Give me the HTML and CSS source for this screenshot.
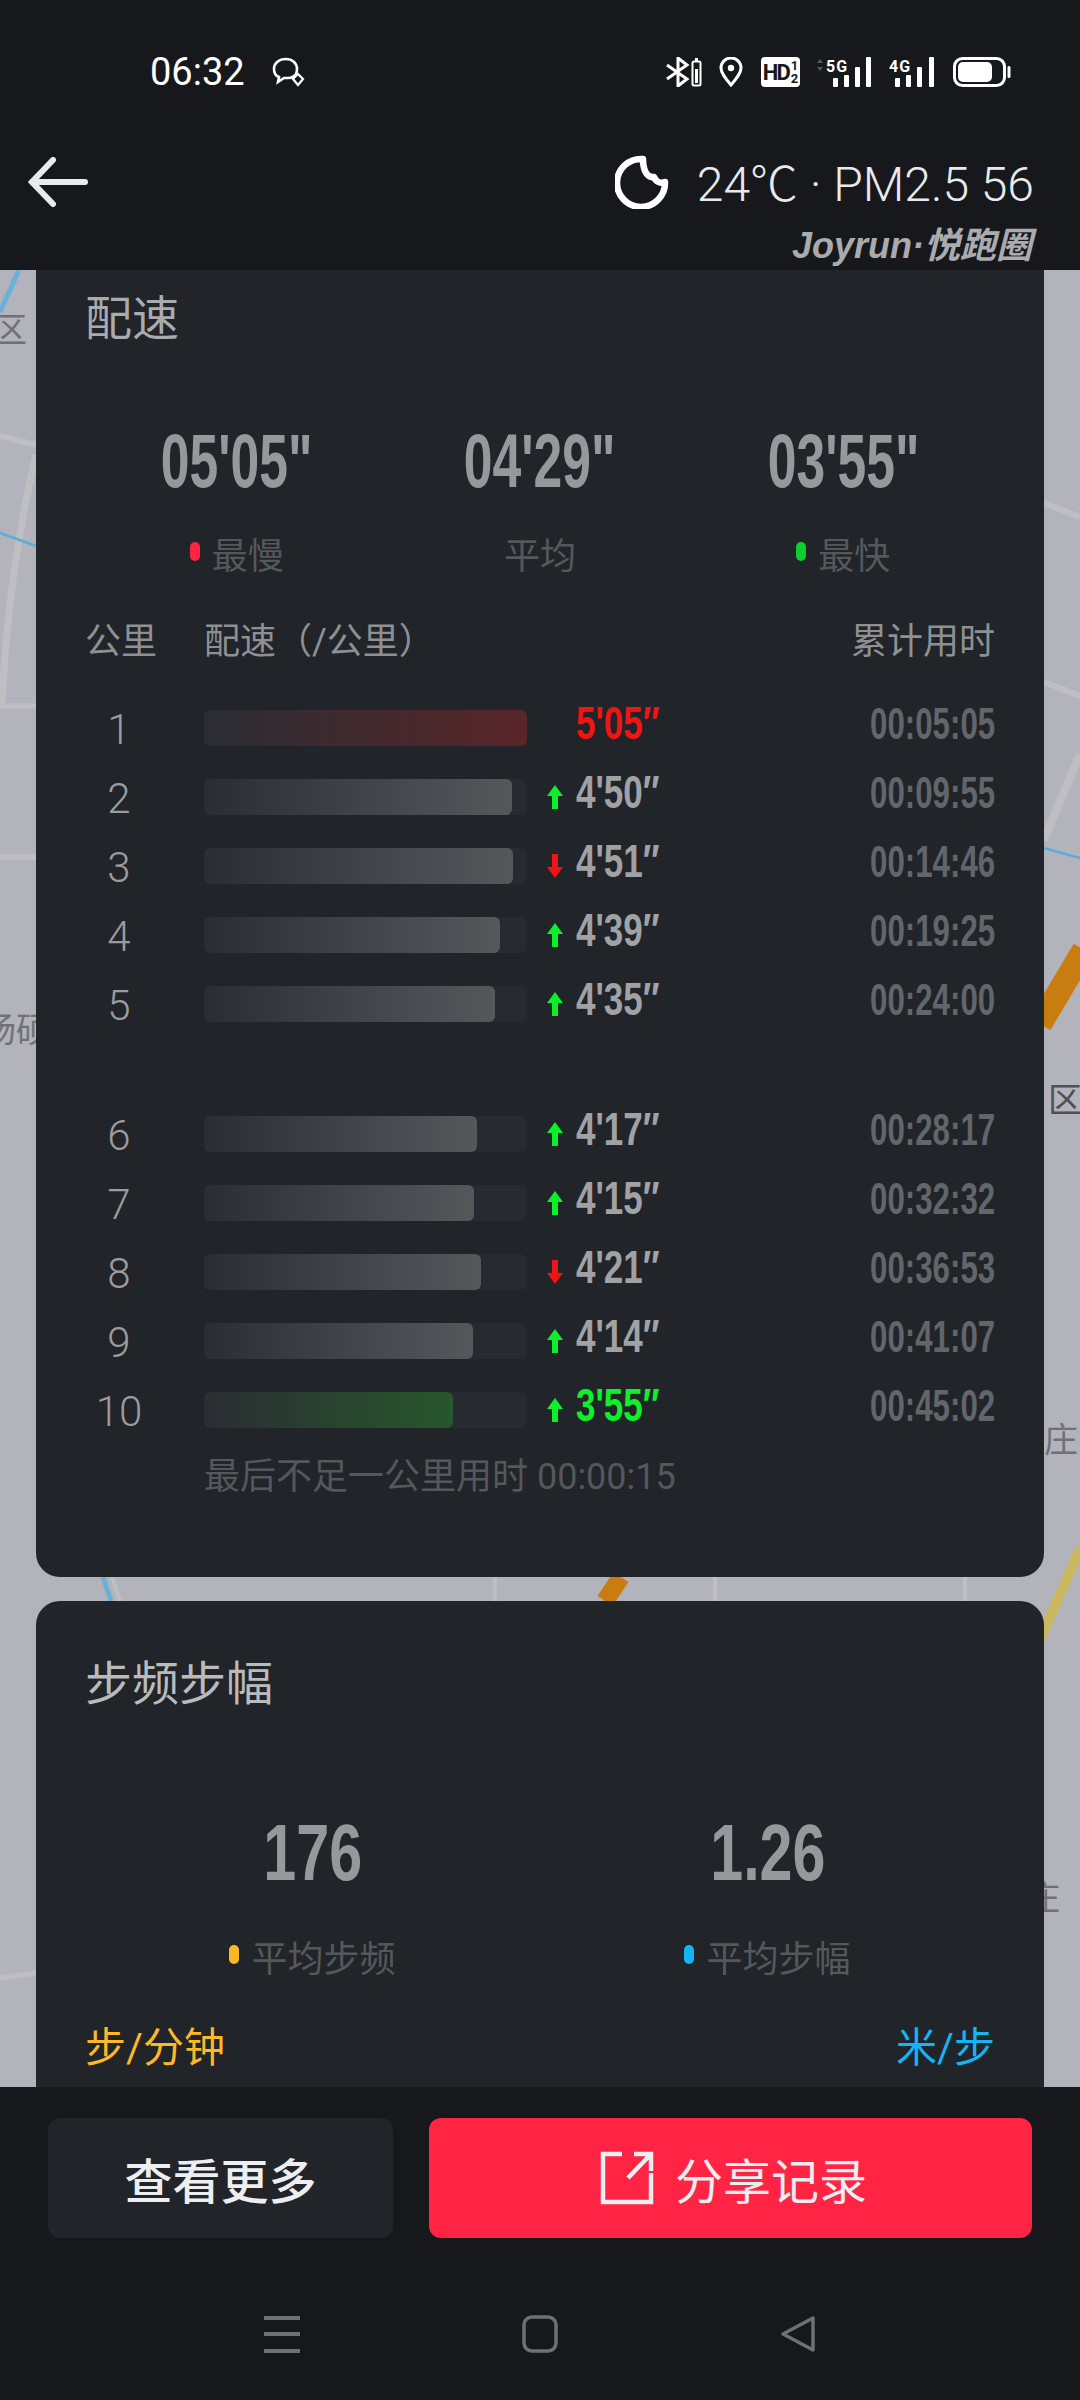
FILE: index.html
```html
<!DOCTYPE html>
<html lang="zh-CN">

<head>
    <meta charset="UTF-8">
    <meta name="viewport" content="width=device-width, initial-scale=1.0">
    <title>Joyrun</title>
    <link rel="stylesheet" href="styles.css">
</head>

<body>
    <div class="page">
        <header class="topBar">
            <div class="statusBar">
                <div class="statusLeft">
                    <span class="clock">06:32</span>
                    <svg class="msgIcon" viewBox="0 0 34 30" fill="none" stroke="#fff" stroke-width="2.6">
                        <path d="M14 2C7 2 2 6 2 12c0 4 2 7 5 8l-1 5 6-4h4c3 0 6-1 8-4 1-2 1-3 1-5 0-6-5-10-11-10z" />
                        <path d="M26 17l5 5-5 6-5-6z" stroke-width="2.2" fill="#17181c" />
                    </svg>
                </div>
                <div class="statusRight">
                    <svg class="iconBt" viewBox="0 0 36 30" fill="none" stroke="#fff">
                        <path d="M1 8l20 14-9 7V1l9 7L1 22" stroke-width="3" />
                        <rect x="26.5" y="4.5" width="8" height="24" rx="1.5" stroke-width="2" />
                        <rect x="29" y="1" width="3" height="3" fill="#fff" stroke="none" />
                        <rect x="29" y="12" width="3" height="14" fill="#fff" stroke="none" />
                    </svg>
                    <svg class="iconPin" viewBox="0 0 24 30" fill="none" stroke="#fff" stroke-width="3">
                        <path d="M12 28C6 21 2 16 2 11a10 10 0 0 1 20 0c0 5-4 10-10 17z" />
                        <circle cx="12" cy="11" r="3.2" fill="#fff" stroke="none" />
                    </svg>
                    <div class="hdBadge"><span class="hdText">HD</span><span class="hdFrac"><i>1</i><i>2</i></span></div>
                    <svg class="iconNet" viewBox="0 0 58 30">
                        <path d="M5 2l3 4H2zM5 14l3-4H2z" fill="#55565a" />
                        <text x="11" y="15" class="netText">5G</text>
                        <rect x="18" y="21" width="5" height="9" rx="1" fill="#fff" />
                        <rect x="29" y="18" width="5" height="12" rx="1" fill="#fff" />
                        <rect x="40" y="10" width="5" height="20" rx="1" fill="#fff" />
                        <rect x="51" y="0" width="5" height="30" rx="1" fill="#fff" />
                    </svg>
                    <svg class="iconNet4" viewBox="0 0 46 30">
                        <text x="0" y="15" class="netText">4G</text>
                        <rect x="6" y="21" width="5" height="9" rx="1" fill="#fff" />
                        <rect x="17" y="18" width="5" height="12" rx="1" fill="#fff" />
                        <rect x="28" y="10" width="5" height="20" rx="1" fill="#fff" />
                        <rect x="40" y="0" width="5" height="30" rx="1" fill="#fff" />
                    </svg>
                    <svg class="iconBattery" viewBox="0 0 58 30" fill="none">
                        <rect x="1.5" y="1.5" width="50" height="27" rx="8" stroke="#fff" stroke-width="3" />
                        <rect x="5" y="5" width="34" height="20" rx="5" fill="#fff" />
                        <rect x="54.5" y="9" width="3" height="12" rx="1.5" fill="#fff" />
                    </svg>
                </div>
            </div>
            <div class="navRow">
                <svg class="backIcon" viewBox="0 0 60 50" fill="none" stroke="#e8eaed" stroke-width="6" stroke-linecap="round">
                    <path d="M25 3L4 25l21 22M4 25h53" />
                </svg>
                <div class="weather">
                    <svg class="moonIcon" viewBox="0 0 54 54" fill="none" stroke="#fff" stroke-width="6.5" stroke-linejoin="round">
                        <path d="M28 4A24 24 0 1 0 50 27C46 29 41 27 39 22C33 23 28 17 28 4Z" />
                    </svg>
                    <span class="weatherText">24℃ · PM2.5 56</span>
                </div>
            </div>
            <div class="brand">Joyrun·悦跑圈</div>
        </header>

        <main class="scrollArea">
            <svg class="mapBg" viewBox="0 270 1080 1817" fill="none">
                <path d="M0 436L36 445M1044 503L1080 517M1044 682L1080 696" stroke="#bfbfc3" stroke-width="6" />
                <path d="M36 455C18 530 6 620 2 704" stroke="#bfbfc3" stroke-width="7" />
                <path d="M0 706H36M0 857H36M0 1978L36 1973" stroke="#bfbfc3" stroke-width="5" />
                <path d="M1044 840L1080 754" stroke="#bfbfc3" stroke-width="8" />
                <path d="M495 1577V1601M715 1577V1601M965 1577V1601M112 1577L120 1601" stroke="#bfbfc3" stroke-width="4" />
                <path d="M19 270L0 312M103 1577L111 1601" stroke="#6bb0d8" stroke-width="5" />
                <path d="M0 533L36 546M1044 848L1080 858" stroke="#5aaed6" stroke-width="2.5" />
                <path d="M1040 1024L1084 950" stroke="#c97d10" stroke-width="24" />
                <path d="M621 1577L605 1601" stroke="#c97d10" stroke-width="18" />
                <path d="M1040 1640L1080 1548" stroke="#c9b860" stroke-width="10" />
                <text x="-7" y="342" class="mapText">区</text>
                <text x="-18" y="1042" class="mapText">扬硕</text>
                <text x="1048" y="1112" class="mapText dark">区</text>
                <text x="1044" y="1452" class="mapText">庄</text>
                <text x="1026" y="1910" class="mapText">庄</text>
            </svg>

            <section class="card paceCard">
                <h2 class="cardTitle">配速</h2>
                <div class="stats three">
                    <div class="stat">
                        <div class="statValue"><span class="cond big">05'05"</span></div>
                        <div class="statLabel"><i class="dot red"></i>最慢</div>
                    </div>
                    <div class="stat">
                        <div class="statValue"><span class="cond big">04'29"</span></div>
                        <div class="statLabel">平均</div>
                    </div>
                    <div class="stat">
                        <div class="statValue"><span class="cond big">03'55"</span></div>
                        <div class="statLabel"><i class="dot green"></i>最快</div>
                    </div>
                </div>
                <div class="tableHead">
                    <span class="headKm">公里</span>
                    <span class="headPace">配速（/公里）</span>
                    <span class="headTotal">累计用时</span>
                </div>
                <div class="rows">
                    <div class="row">
                        <span class="km">1</span>
                        <div class="track"><div class="fill slow" style="width: 323px"></div></div>
                        <span class="arrow"></span>
                        <span class="pace redText"><span class="cond mid">5'05″</span></span>
                        <span class="total"><span class="cond end">00:05:05</span></span>
                    </div>
                    <div class="row">
                        <span class="km">2</span>
                        <div class="track"><div class="fill" style="width: 308px"></div></div>
                        <span class="arrow"><svg viewBox="0 0 16 24"><path d="M8 0l8 11h-5v13H5V11H0z" fill="#0bf02a" /></svg></span>
                        <span class="pace"><span class="cond mid">4'50″</span></span>
                        <span class="total"><span class="cond end">00:09:55</span></span>
                    </div>
                    <div class="row">
                        <span class="km">3</span>
                        <div class="track"><div class="fill" style="width: 309px"></div></div>
                        <span class="arrow"><svg viewBox="0 0 16 24"><path d="M8 24L0 13h5V0h6v13h5z" fill="#f01414" /></svg></span>
                        <span class="pace"><span class="cond mid">4'51″</span></span>
                        <span class="total"><span class="cond end">00:14:46</span></span>
                    </div>
                    <div class="row">
                        <span class="km">4</span>
                        <div class="track"><div class="fill" style="width: 296px"></div></div>
                        <span class="arrow"><svg viewBox="0 0 16 24"><path d="M8 0l8 11h-5v13H5V11H0z" fill="#0bf02a" /></svg></span>
                        <span class="pace"><span class="cond mid">4'39″</span></span>
                        <span class="total"><span class="cond end">00:19:25</span></span>
                    </div>
                    <div class="row rowBreak">
                        <span class="km">5</span>
                        <div class="track"><div class="fill" style="width: 291px"></div></div>
                        <span class="arrow"><svg viewBox="0 0 16 24"><path d="M8 0l8 11h-5v13H5V11H0z" fill="#0bf02a" /></svg></span>
                        <span class="pace"><span class="cond mid">4'35″</span></span>
                        <span class="total"><span class="cond end">00:24:00</span></span>
                    </div>
                    <div class="row">
                        <span class="km">6</span>
                        <div class="track"><div class="fill" style="width: 273px"></div></div>
                        <span class="arrow"><svg viewBox="0 0 16 24"><path d="M8 0l8 11h-5v13H5V11H0z" fill="#0bf02a" /></svg></span>
                        <span class="pace"><span class="cond mid">4'17″</span></span>
                        <span class="total"><span class="cond end">00:28:17</span></span>
                    </div>
                    <div class="row">
                        <span class="km">7</span>
                        <div class="track"><div class="fill" style="width: 270px"></div></div>
                        <span class="arrow"><svg viewBox="0 0 16 24"><path d="M8 0l8 11h-5v13H5V11H0z" fill="#0bf02a" /></svg></span>
                        <span class="pace"><span class="cond mid">4'15″</span></span>
                        <span class="total"><span class="cond end">00:32:32</span></span>
                    </div>
                    <div class="row">
                        <span class="km">8</span>
                        <div class="track"><div class="fill" style="width: 277px"></div></div>
                        <span class="arrow"><svg viewBox="0 0 16 24"><path d="M8 24L0 13h5V0h6v13h5z" fill="#f01414" /></svg></span>
                        <span class="pace"><span class="cond mid">4'21″</span></span>
                        <span class="total"><span class="cond end">00:36:53</span></span>
                    </div>
                    <div class="row">
                        <span class="km">9</span>
                        <div class="track"><div class="fill" style="width: 269px"></div></div>
                        <span class="arrow"><svg viewBox="0 0 16 24"><path d="M8 0l8 11h-5v13H5V11H0z" fill="#0bf02a" /></svg></span>
                        <span class="pace"><span class="cond mid">4'14″</span></span>
                        <span class="total"><span class="cond end">00:41:07</span></span>
                    </div>
                    <div class="row">
                        <span class="km">10</span>
                        <div class="track"><div class="fill fast" style="width: 249px"></div></div>
                        <span class="arrow"><svg viewBox="0 0 16 24"><path d="M8 0l8 11h-5v13H5V11H0z" fill="#0bf02a" /></svg></span>
                        <span class="pace greenText"><span class="cond mid">3'55″</span></span>
                        <span class="total"><span class="cond end">00:45:02</span></span>
                    </div>
                </div>
                <div class="lastNote">最后不足一公里用时 00:00:15</div>
            </section>

            <section class="card cadenceCard">
                <h2 class="cardTitle light">步频步幅</h2>
                <div class="stats two">
                    <div class="stat">
                        <div class="statValue"><span class="cond big wide">176</span></div>
                        <div class="statLabel"><i class="dot orange"></i>平均步频</div>
                    </div>
                    <div class="stat">
                        <div class="statValue"><span class="cond big wide">1.26</span></div>
                        <div class="statLabel"><i class="dot blue"></i>平均步幅</div>
                    </div>
                </div>
                <div class="units">
                    <span class="unitOrange">步/分钟</span>
                    <span class="unitBlue">米/步</span>
                </div>
            </section>
        </main>

        <footer class="bottomBar">
            <div class="actions">
                <button class="btn btnMore">查看更多</button>
                <button class="btn btnShare">
                    <svg class="shareIcon" viewBox="0 0 54 54" fill="none" stroke="#eceef0" stroke-width="4.5">
                        <path d="M22 3H3v48h48V22M28 27L50 4M34 3h17v17" />
                    </svg>
                    分享记录
                </button>
            </div>
            <div class="navBar">
                <svg class="navMenu" viewBox="0 0 36 37" fill="#6f7074">
                    <rect y="0" width="36" height="4" />
                    <rect y="16" width="36" height="4" />
                    <rect y="33" width="36" height="4" />
                </svg>
                <svg class="navHome" viewBox="0 0 36 38" fill="none" stroke="#6f7074" stroke-width="3.5">
                    <rect x="2" y="2" width="32" height="34" rx="8" />
                </svg>
                <svg class="navBack" viewBox="0 0 36 36" fill="none" stroke="#6f7074" stroke-width="3.5" stroke-linejoin="round">
                    <path d="M33 2L3 18l30 16z" />
                </svg>
            </div>
        </footer>
    </div>
</body>

</html>
```

FILE: styles.css
```css
* {
    box-sizing: border-box;
}

body {
    margin: 0;
    background: #17181c;
    font-family: Roboto, "Noto Sans CJK SC", sans-serif;
}

.page {
    display: flex;
    flex-direction: column;
    width: 1080px;
    height: 2400px;
    overflow: hidden;
}

/* top bar */
.topBar {
    height: 270px;
    flex: none;
    background: #17181c;
}

.statusBar {
    display: flex;
    justify-content: space-between;
    align-items: center;
    height: 144px;
    padding: 0 69px 0 150px;
}

.statusLeft {
    display: flex;
    align-items: center;
    gap: 27px;
}

.clock {
    font-size: 38px;
    color: #fff;
}

.msgIcon {
    width: 34px;
    height: 30px;
}

.statusRight {
    display: flex;
    align-items: center;
}

.statusRight svg {
    height: 30px;
    flex: none;
}

.iconBt {
    width: 36px;
}

.iconPin {
    width: 24px;
    margin-left: 17px;
}

.hdBadge {
    display: flex;
    align-items: center;
    justify-content: center;
    width: 39px;
    height: 30px;
    margin-left: 18px;
    background: #fff;
    border-radius: 4px;
    color: #17181c;
    font-weight: 700;
}

.hdText {
    font-size: 22px;
    letter-spacing: -2px;
}

.hdFrac {
    display: flex;
    flex-direction: column;
    margin-left: 2px;
    font-size: 13px;
    line-height: 13px;
}

.hdFrac i {
    font-style: normal;
}

.iconNet {
    width: 58px;
    margin-left: 15px;
}

.iconNet4 {
    width: 46px;
    margin-left: 16px;
}

.iconBattery {
    width: 58px;
    margin-left: 18px;
}

.netText {
    font-size: 16px;
    font-weight: 700;
    letter-spacing: 1px;
    fill: #fff;
}

.navRow {
    display: flex;
    justify-content: space-between;
    align-items: center;
    height: 76px;
    padding: 0 46px 0 28px;
}

.backIcon {
    width: 60px;
    height: 50px;
}

.weather {
    display: flex;
    align-items: center;
    gap: 28px;
}

.moonIcon {
    width: 54px;
    height: 54px;
}

.weatherText {
    margin-top: -4px;
    font-size: 48px;
    font-weight: 300;
    color: #e8eaed;
}

.brand {
    padding: 6px 48px 0 0;
    text-align: right;
    font-family: "Liberation Sans", "Noto Sans CJK SC", sans-serif;
    font-size: 36px;
    font-weight: 700;
    font-style: italic;
    line-height: 40px;
    color: #a9abae;
}

/* map and cards */
.scrollArea {
    position: relative;
    flex: 1;
    overflow: hidden;
    padding: 0 36px;
    background: #b3b3bb;
}

.mapBg {
    position: absolute;
    top: 0;
    left: 0;
    width: 1080px;
    height: 1817px;
}

.mapText {
    font-family: "Noto Sans CJK SC", sans-serif;
    font-size: 34px;
    fill: #6f7175;
}

.mapText.dark {
    fill: #4e5054;
}

.card {
    position: relative;
    background: #212428;
    padding: 0 49px;
}

.paceCard {
    height: 1307px;
    padding-top: 19px;
    border-radius: 0 0 24px 24px;
}

.cadenceCard {
    height: 520px;
    margin-top: 24px;
    padding-top: 53px;
    border-radius: 24px 24px 0 0;
}

.cardTitle {
    margin: 0;
    font-size: 47px;
    font-weight: 400;
    line-height: 60px;
    color: #a9abae;
}

.cardTitle.light {
    color: #b9bbbd;
}

.stats {
    display: grid;
}

.stats.three {
    grid-template-columns: repeat(3, 1fr);
    margin-top: 61px;
}

.stats.two {
    grid-template-columns: repeat(2, 1fr);
    margin-top: 88px;
}

.stat {
    text-align: center;
}

.statValue {
    height: 102px;
    line-height: 102px;
}

.statLabel {
    display: flex;
    justify-content: center;
    align-items: center;
    gap: 12px;
    height: 60px;
    margin-top: 11px;
    font-size: 36px;
    color: #55585b;
}

.two .statLabel {
    margin-top: 22px;
}

.dot {
    width: 10px;
    height: 19px;
    border-radius: 5px;
    margin-top: -4px;
}

.dot.red {
    background: #ff2444;
}

.dot.green {
    background: #0ccf2a;
}

.dot.orange {
    background: #fdb827;
}

.dot.blue {
    background: #12b5f5;
}

/* condensed numbers, the font set has no such face */
.cond {
    display: inline-block;
    font-family: "Liberation Sans", sans-serif;
    font-weight: 700;
    white-space: nowrap;
}

.big {
    font-size: 76px;
    color: #96999c;
    transform: scaleX(0.68);
}

.big.wide {
    font-size: 80px;
    transform: scaleX(0.74);
}

.mid {
    font-size: 47px;
    transform: scaleX(0.745);
    transform-origin: left center;
}

.end {
    font-size: 44px;
    transform: scaleX(0.71);
    transform-origin: right center;
}

.tableHead {
    display: flex;
    height: 60px;
    margin-top: 29px;
    font-size: 36px;
    line-height: 60px;
    color: #8e9194;
}

.headKm {
    width: 119px;
}

.headTotal {
    margin-left: auto;
}

.rows {
    margin-top: 21px;
}

.row {
    display: flex;
    align-items: center;
    height: 69px;
}

.rowBreak {
    margin-bottom: 61px;
}

.km {
    width: 68px;
    margin-right: 51px;
    padding-top: 4px;
    text-align: center;
    font-size: 42px;
    font-weight: 300;
    color: #9a9c9f;
}

.track {
    width: 323px;
    height: 36px;
    background: #272a30;
    border-radius: 6px;
}

.fill {
    height: 100%;
    border-radius: 6px;
    background: linear-gradient(90deg, #2a2d33, #55585b);
}

.fill.slow {
    background: linear-gradient(90deg, #2a2d33, #5a2629);
}

.fill.fast {
    background: linear-gradient(90deg, #2a2d33, #27572c);
}

.arrow {
    width: 16px;
    height: 24px;
    margin-left: 20px;
}

.arrow svg {
    display: block;
    width: 16px;
    height: 24px;
}

.pace {
    width: 100px;
    margin-left: 13px;
    margin-top: -10px;
    color: #a0a2a5;
}

.pace.redText {
    color: #f01414;
}

.pace.greenText {
    color: #10f028;
}

.total {
    margin-left: auto;
    margin-top: -8px;
    color: #62666b;
}

.lastNote {
    height: 66px;
    padding-left: 119px;
    font-size: 36px;
    line-height: 66px;
    color: #54575c;
}

.units {
    display: flex;
    justify-content: space-between;
    height: 60px;
    margin-top: 32px;
    font-size: 41px;
    line-height: 60px;
}

.unitOrange {
    color: #fdb827;
}

.unitBlue {
    color: #12b5f5;
}

/* bottom */
.bottomBar {
    height: 313px;
    flex: none;
    background: #17181c;
}

.actions {
    display: flex;
    gap: 36px;
    padding: 31px 48px 0;
}

.btn {
    display: flex;
    justify-content: center;
    align-items: center;
    height: 120px;
    border: none;
    border-radius: 12px;
    font-family: inherit;
    font-size: 48px;
    color: #eceef0;
}

.btnMore {
    width: 345px;
    background: #212428;
    font-weight: 500;
}

.btnShare {
    width: 603px;
    gap: 21px;
    padding-left: 12px;
    background: #ff2444;
}

.shareIcon {
    width: 54px;
    height: 54px;
}

.navBar {
    display: flex;
    align-items: center;
    height: 36px;
    margin-top: 78px;
    padding-left: 264px;
}

.navMenu {
    width: 36px;
    height: 37px;
}

.navHome {
    width: 36px;
    height: 38px;
    margin-left: 222px;
}

.navBack {
    width: 36px;
    height: 36px;
    margin-left: 222px;
}
```
